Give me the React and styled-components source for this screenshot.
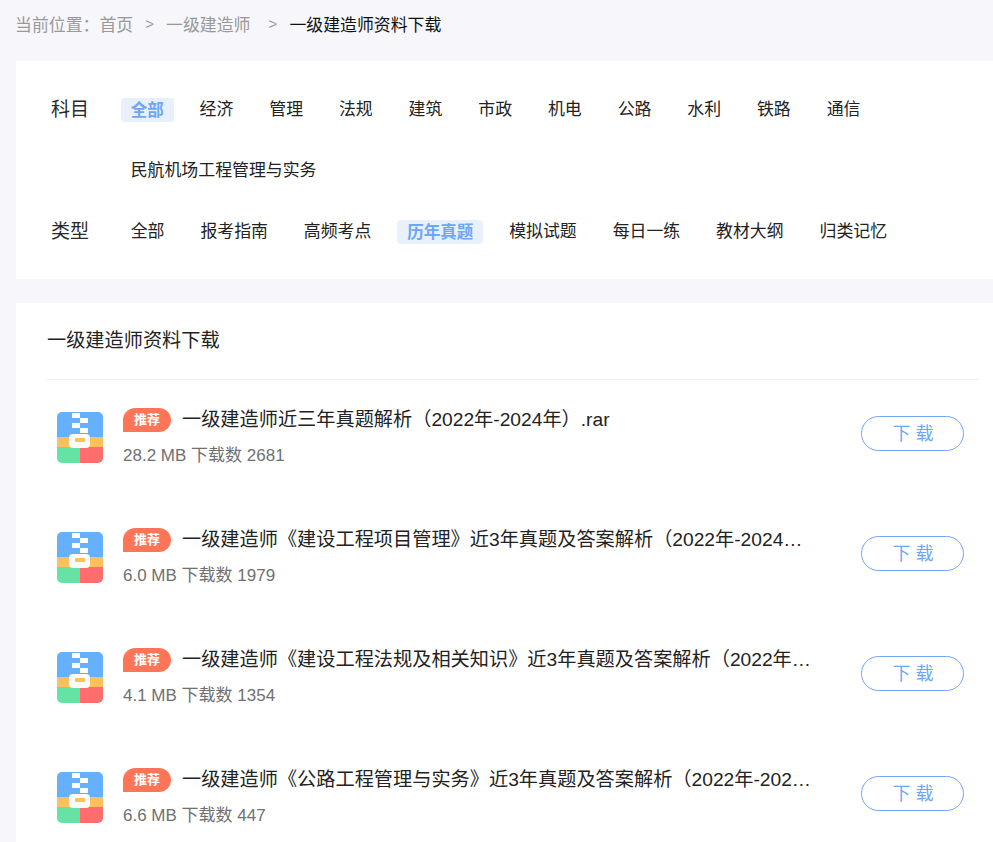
import React from "react";
import styled, { createGlobalStyle } from "styled-components";

const GlobalStyle = createGlobalStyle`
  html, body {
    margin: 0;
    padding: 0;
    background: #f6f6fb;
    font-family: "Liberation Sans", "Noto Sans CJK SC", sans-serif;
    overflow: hidden;
  }
`;

const Page = styled.div`
  height: 842px;
  overflow: hidden;
  padding-left: 16px;
`;

const Crumbs = styled.div`
  height: 61px;
  padding-bottom: 14px;
  box-sizing: border-box;
  display: flex;
  align-items: center;
  font-size: 16.9px;
  color: #999;
  margin-left: -1px;
`;

const CrumbSep = styled.span`
  font-size: 15px;
  margin: 0 12px 0 ${(p) => p.$left}px;
`;

const CrumbNow = styled.span`
  color: #111;
`;

const FilterPanel = styled.section`
  background: #fff;
  height: 218px;
  padding: 18px 0 0 35px;
  box-sizing: border-box;
`;

const FilterRow = styled.div`
  display: flex;
  align-items: flex-start;
`;

const FilterLabel = styled.div`
  width: 70px;
  flex: none;
  font-size: 19px;
  line-height: 61px;
  color: #2a2a2a;
`;

const Tags = styled.div`
  width: 790px;
  margin-left: -0.3px;
  display: flex;
  flex-wrap: wrap;
  column-gap: 15.9px;
`;

const TagCell = styled.div`
  height: 61px;
  display: flex;
  align-items: center;
`;

const Tag = styled.span`
  padding: 0 10px;
  height: 24px;
  line-height: 24px;
  font-size: ${(p) => (p.$active ? "16.5px" : "16.9px")};
  border-radius: 4px;
  color: ${(p) => (p.$active ? "#6ea5f7" : "#222")};
  background: ${(p) => (p.$active ? "#e8f0fc" : "transparent")};
  font-weight: ${(p) => (p.$active ? 700 : 400)};
`;

const ListPanel = styled.section`
  background: #fff;
  margin-top: 24px;
  padding: 0 14px 0 31px;
`;

const ListTitle = styled.h2`
  margin: 0;
  height: 76px;
  line-height: 75px;
  font-size: 19.2px;
  font-weight: 400;
  color: #222;
  border-bottom: 1px solid #eee;
`;

const Item = styled.div`
  height: 120px;
  display: flex;
  align-items: flex-start;
`;

const FileIcon = styled.svg`
  flex: none;
  width: 46px;
  height: 51px;
  margin: 32px 20px 0 10px;
  filter: blur(0.5px);
`;

const ItemBody = styled.div`
  flex: none;
  width: 690px;
  padding-top: 28px;
`;

const TitleLine = styled.div`
  display: flex;
  align-items: center;
  height: 24px;
`;

const Badge = styled.span`
  flex: none;
  width: 48px;
  height: 24px;
  line-height: 24px;
  text-align: center;
  font-size: 13px;
  font-weight: 700;
  color: #fff;
  background: #ff7558;
  border-radius: 12px 12px 12px 0;
  margin-right: 11px;
`;

const ItemName = styled.div`
  width: 631px;
  margin-top: -1px;
  font-size: 19.2px;
  line-height: 24px;
  color: #222;
  white-space: nowrap;
  overflow: hidden;
  text-overflow: ellipsis;
`;

const Meta = styled.div`
  margin-top: 12px;
  font-size: 17px;
  line-height: 24px;
  color: #707070;
`;

const DownloadButton = styled.button`
  flex: none;
  width: 103px;
  height: 35px;
  margin: 36px 0 0 48px;
  padding: 0 0 4px 1px;
  border: 1px solid #6ea5f7;
  border-radius: 18px;
  background: #fff;
  color: #6ea5f7;
  font-family: inherit;
  font-size: 18px;
`;

const ZipIcon = () => (
  <FileIcon viewBox="0 0 46 51">
    <path d="M0 25V5a5 5 0 0 1 5-5h36a5 5 0 0 1 5 5v20z" fill="#66b1ff" />
    <rect y="25" width="46" height="10" fill="#ffc05c" />
    <path d="M0 35h23v16H5a5 5 0 0 1-5-5z" fill="#65e3a5" />
    <path d="M23 35h23v11a5 5 0 0 1-5 5H23z" fill="#ff6d6d" />
    <rect x="15" y="1" width="8" height="5" fill="#fff" />
    <rect x="23" y="6" width="8" height="5" fill="#fff" />
    <rect x="15" y="11" width="8" height="5" fill="#fff" />
    <rect x="23" y="16" width="8" height="5" fill="#fff" />
    <rect x="12" y="22" width="21" height="14" rx="4" fill="#fff" />
    <rect x="18" y="26" width="10" height="4" fill="#ffc05c" />
  </FileIcon>
);

const subjects = ["全部", "经济", "管理", "法规", "建筑", "市政", "机电", "公路", "水利", "铁路", "通信", "民航机场工程管理与实务"];
const types = ["全部", "报考指南", "高频考点", "历年真题", "模拟试题", "每日一练", "教材大纲", "归类记忆"];

const files = [
  { name: "一级建造师近三年真题解析（2022年-2024年）.rar", size: "28.2 MB", count: 2681 },
  { name: "一级建造师《建设工程项目管理》近3年真题及答案解析（2022年-2024年）.rar", size: "6.0 MB", count: 1979 },
  { name: "一级建造师《建设工程法规及相关知识》近3年真题及答案解析（2022年-2024年）.rar", size: "4.1 MB", count: 1354 },
  { name: "一级建造师《公路工程管理与实务》近3年真题及答案解析（2022年-2024年）.rar", size: "6.6 MB", count: 447 },
];

const Filter = ({ label, items, active }) => (
  <FilterRow>
    <FilterLabel>{label}</FilterLabel>
    <Tags>
      {items.map((t) => (
        <TagCell key={t}>
          <Tag $active={t === active}>{t}</Tag>
        </TagCell>
      ))}
    </Tags>
  </FilterRow>
);

export default function App() {
  return (
    <Page>
      <GlobalStyle />
      <Crumbs>
        当前位置：首页
        <CrumbSep $left={12}>&gt;</CrumbSep>
        一级建造师
        <CrumbSep $left={14}>&nbsp;&gt;</CrumbSep>
        <CrumbNow>一级建造师资料下载</CrumbNow>
      </Crumbs>
      <FilterPanel>
        <Filter label="科目" items={subjects} active="全部" />
        <Filter label="类型" items={types} active="历年真题" />
      </FilterPanel>
      <ListPanel>
        <ListTitle>一级建造师资料下载</ListTitle>
        {files.map((f) => (
          <Item key={f.name}>
            <ZipIcon />
            <ItemBody>
              <TitleLine>
                <Badge>推荐</Badge>
                <ItemName>{f.name}</ItemName>
              </TitleLine>
              <Meta>
                {f.size} 下载数 {f.count}
              </Meta>
            </ItemBody>
            <DownloadButton>下 载</DownloadButton>
          </Item>
        ))}
      </ListPanel>
    </Page>
  );
}
